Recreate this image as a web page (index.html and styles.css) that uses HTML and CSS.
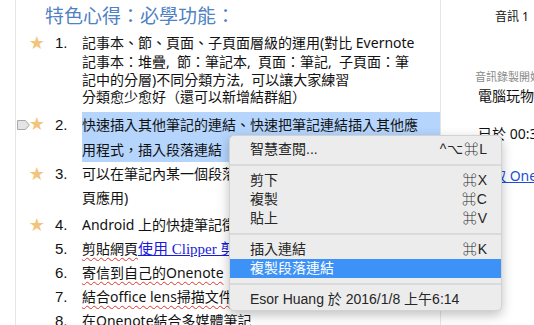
FILE: index.html
```html
<!DOCTYPE html>
<html lang="zh-Hant">
<head>
  <meta charset="UTF-8">
  <meta name="viewport" content="width=device-width, initial-scale=1.0">
  <title>Onenote</title>
  <link rel="stylesheet" href="styles.css">
</head>
<body>
  <div class="page">
    <div class="note">
      <h1 class="heading">特色心得：必學功能：</h1>

      <div class="item first">
        <div class="mark"><span class="star">&#9733;</span></div>
        <div class="num">1.</div>
        <div class="text">記事本、節、頁面、子頁面層級的運用(對比 Evernote</div>
      </div>
      <div class="sub">記事本：堆疊,&nbsp; 節：筆記本,&nbsp; 頁面：筆記,&nbsp; 子頁面：筆<br>記中的分層)不同分類方法,&nbsp; 可以讓大家練習<br>分類愈少愈好（還可以新增結群組）</div>

      <div class="item two">
        <div class="mark">
          <svg class="tag" width="13" height="10" viewBox="0 0 13 10"><path d="M0.5 0.5H8.5L12.3 5L8.5 9.5H0.5Z" fill="#e4e4e4" stroke="#a9a9a9"/></svg>
          <span class="star">&#9733;</span>
        </div>
        <div class="num">2.</div>
        <div class="text selected">快速插入其他筆記的連結、快速把筆記連結插入其他應<br>用程式，插入段落連結</div>
      </div>

      <div class="item">
        <div class="mark"><span class="star">&#9733;</span></div>
        <div class="num">3.</div>
        <div class="text">可以在筆記內某一個段落插入其他筆記的頁面連結(跨<br>頁應用)</div>
      </div>

      <div class="item four">
        <div class="mark"><span class="star">&#9733;</span></div>
        <div class="num">4.</div>
        <div class="text">Android 上的快捷筆記徵件</div>
      </div>

      <div class="item">
        <div class="mark"></div>
        <div class="num">5.</div>
        <div class="text"><span class="typo">剪貼網頁</span><a class="link" href="#">使用 Clipper 剪輯網頁</a></div>
      </div>

      <div class="item">
        <div class="mark"></div>
        <div class="num">6.</div>
        <div class="text"><span class="typo">寄信到自己的Onenote</span></div>
      </div>

      <div class="item">
        <div class="mark"></div>
        <div class="num">7.</div>
        <div class="text"><span class="typo">結合office lens掃描文件</span></div>
      </div>

      <div class="item">
        <div class="mark"></div>
        <div class="num">8.</div>
        <div class="text">在Onenote結合多媒體筆記</div>
      </div>
    </div>

    <div class="side">
      <div class="side-title">音訊 1</div>
      <div class="side-caption">音訊錄製開始</div>
      <div class="side-line">電腦玩物</div>
      <div class="side-line time">已於 00:30</div>
      <a class="side-link" href="#">讀取 Onenote</a>
    </div>

    <div class="menu">
      <div class="menu-item"><span>智慧查閱...</span><span class="key">^⌥⌘L</span></div>
      <div class="sep"></div>
      <div class="menu-item"><span>剪下</span><span class="key">⌘X</span></div>
      <div class="menu-item"><span>複製</span><span class="key">⌘C</span></div>
      <div class="menu-item"><span>貼上</span><span class="key">⌘V</span></div>
      <div class="sep"></div>
      <div class="menu-item"><span>插入連結</span><span class="key">⌘K</span></div>
      <div class="menu-item active"><span>複製段落連結</span></div>
      <div class="sep"></div>
      <div class="menu-item"><span>Esor Huang 於 2016/1/8 上午6:14</span></div>
    </div>
  </div>
</body>
</html>
```

FILE: styles.css
```css
body {
  margin: 0px;
  background-color: #ffffff;
  font-family: "Noto Sans", "Noto Sans CJK TC", sans-serif;
  color: #111111;
}
.page {
  position: relative;
  display: flex;
  width: 534px;
  height: 325px;
  overflow: hidden;
}
.note {
  width: 424px;
  margin-left: 15px;
  border-left: 1px solid #e6e6e6;
  border-right: 1px solid #e6e6e6;
  flex-shrink: 0;
}
.heading {
  margin: 0;
  padding-left: 29px;
  height: 32px;
  line-height: 30px;
  font-size: 19px;
  font-weight: normal;
  color: #4f81c3;
  font-family: "Noto Sans CJK TC", sans-serif;
}
.item {
  display: grid;
  grid-template-columns: 30px 36px 1fr;
  line-height: 24px;
  font-size: 14px;
  white-space: nowrap;
}
.item.first {
  line-height: 21px;
}
.item.two {
  margin-top: 6px;
  line-height: 25px;
}
.item.four {
  margin-top: 3px;
}
.mark {
  display: flex;
  justify-content: flex-end;
  align-items: flex-start;
  position: relative;
}
.star {
  color: #f2c47c;
  font-size: 18px;
  font-family: "DejaVu Sans", sans-serif;
  line-height: 24px;
  margin-right: 1px;
}
.first .star {
  line-height: 21px;
}
.tag {
  position: absolute;
  left: 1px;
  top: 8px;
}
.num {
  padding-left: 9px;
  font-family: "Liberation Sans", sans-serif;
  font-size: 15px;
}
.text {
  overflow: hidden;
}
.selected {
  background-color: #b5d5fd;
}
.sub {
  padding-left: 66px;
  font-size: 14px;
  line-height: 17.5px;
  white-space: nowrap;
}
.typo {
  text-decoration: underline wavy #e0342c;
  text-decoration-thickness: 1px;
  text-underline-offset: 3px;
}
.link {
  color: #1a1adb;
  font-family: "Liberation Serif", "Noto Sans CJK TC", serif;
  font-size: 15px;
}
.side {
  flex: 1;
  padding-left: 34px;
  font-size: 14px;
  white-space: nowrap;
}
.side-title {
  font-size: 12px;
  padding-left: 20px;
  margin-top: 8px;
  line-height: 18px;
}
.side-caption {
  font-size: 11px;
  color: #8a8a8a;
  margin-top: 43px;
  line-height: 16px;
}
.side-line {
  line-height: 22px;
  padding-left: 3px;
}
.side-line.time {
  margin-top: 16px;
}
.side-link {
  display: block;
  margin-top: 20px;
  color: #1a4fd6;
  padding-left: 3px;
}
.menu {
  position: absolute;
  left: 229px;
  top: 135px;
  width: 273px;
  height: 176px;
  box-sizing: border-box;
  padding: 4px 0;
  background-color: #ececec;
  border-radius: 5px;
  border: 1px solid #d2d2d2;
  box-shadow: 0 4px 12px rgba(0, 0, 0, 0.25);
  font-family: "Liberation Sans", "Noto Sans CJK TC", sans-serif;
  font-size: 14px;
  color: #262626;
}
.menu-item {
  display: flex;
  justify-content: space-between;
  height: 19px;
  line-height: 19px;
  padding: 0 13px 0 20px;
}
.menu-item.active {
  background-color: #3d92f7;
  color: #ffffff;
}
.key {
  letter-spacing: 1px;
}
.sep {
  height: 2px;
  margin: 5px 0;
  background-color: #dadada;
}
```
